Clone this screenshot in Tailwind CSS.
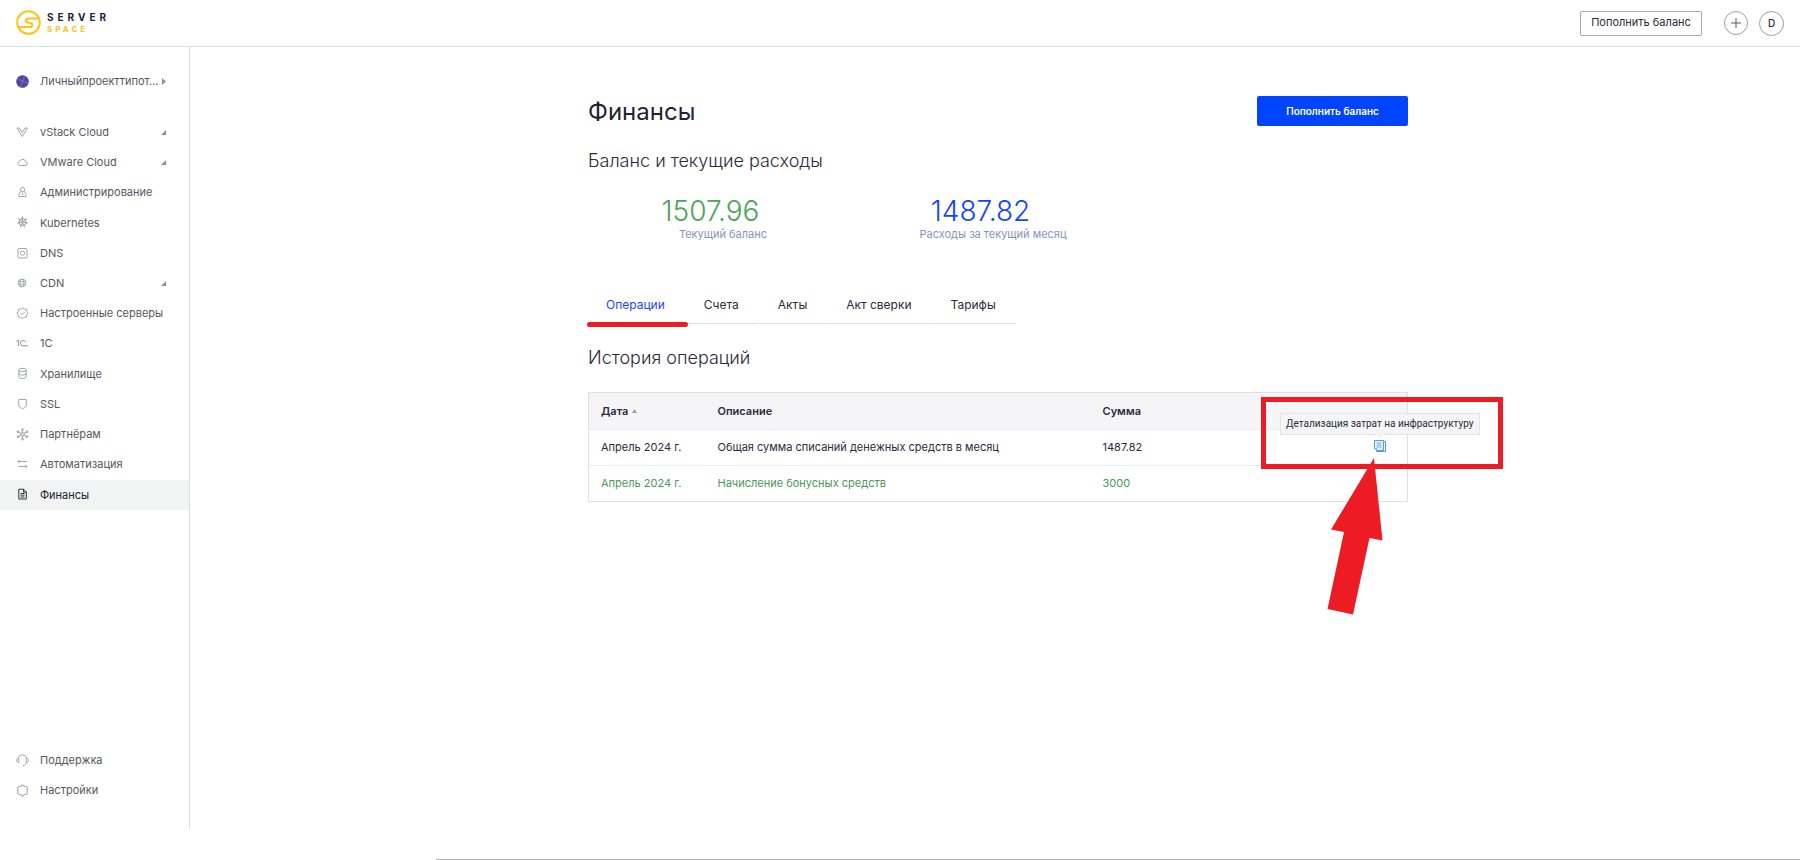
<!DOCTYPE html>
<html lang="ru">
<head>
<meta charset="utf-8">
<meta name="viewport" content="width=device-width, initial-scale=1">
<title>Serverspace — Финансы</title>
<script src="https://cdn.jsdelivr.net/npm/@tailwindcss/browser@4"></script>
</head>
<body class="flex min-h-screen flex-col bg-white font-['Inter',sans-serif] text-[11px] text-[#2b2b3c]">

<header class="flex h-[47px] shrink-0 items-center justify-between border-b border-[#dcdddd] px-4">
  <a href="#" class="flex items-center gap-[5px]" aria-label="Serverspace">
    <svg class="size-[26px]" viewBox="0 0 26 26" fill="none" stroke="#fcc419" stroke-width="2" stroke-linecap="round">
      <circle cx="12.500" cy="12.500" r="11.300"/>
      <path d="M22.500 8.500H12a2.200 2.200 0 0 0-2.300 2.100c0 1.100.9 1.600 2.200 1.900l2.300.5c1.300.3 2.100.9 2.100 2 0 1.200-.9 2-2.200 2H2.800" stroke-width="2.200"/>
    </svg>
    <span class="flex flex-col gap-[3px] pb-px font-bold">
      <span class="text-[10px] leading-[10px] tracking-[4px] text-[#23263b]">SERVER</span>
      <span class="text-[8px] leading-[8px] tracking-[3px] text-[#fcc419]">SPACE</span>
    </span>
  </a>
  <div class="flex items-center">
    <button class="mr-[22px] h-[25px] w-[122px] rounded-[2px] border border-[#a5a7ab] pb-px text-[#2b2b3c]">Пополнить баланс</button>
    <button class="mr-[11px] flex size-6 items-center justify-center rounded-full border border-[#9c9ea2]" aria-label="Создать">
      <svg class="size-[10px]" viewBox="0 0 10 10" stroke="#55585f" fill="none"><path d="M5 0v10M0 5h10"/></svg>
    </button>
    <button class="size-[25px] rounded-full border border-[#9c9ea2] text-[10px] font-medium">D</button>
  </div>
</header>

<div class="flex flex-1">
  <aside class="mb-[31px] flex w-[190px] shrink-0 flex-col border-r border-[#dcdddd] pt-[19px] pb-6 text-[#555960]">
    <a href="#" class="flex h-[30px] items-center pl-4">
      <svg class="mr-[11px] size-[13px]" viewBox="0 0 13 13"><circle cx="6.500" cy="6.500" r="6.300" fill="#4f46a3"/><path d="M6.500 6.500 1 3.500M6.500 6.500 9 1M6.500 6.500 12 8M6.500 6.500 4 12" stroke="#8a84c9" stroke-width=".7"/></svg>
      <span class="w-[122px]">Личныйпроекттипот...</span>
      <svg class="h-[7px] w-1" viewBox="0 0 4 7"><path d="M0 0l4 3.500L0 7z" fill="#8d9095"/></svg>
    </a>

    <nav class="mt-[21px] grid h-[393px] auto-rows-fr">
      <a href="#" class="flex items-center pr-[23px] pl-4">
        <svg class="mr-[11px] size-[13px]" viewBox="0 0 13 13" fill="none" stroke="#a2a5a9"><path d="M1 2h2.500l2.700 4.500L9 2h2.500L6.200 10.500z"/></svg>
        <span class="flex-1">vStack Cloud</span>
        <svg class="size-[5px]" viewBox="0 0 5 5"><path d="M5 0v5H0z" fill="#8d9095"/></svg>
      </a>
      <a href="#" class="flex items-center pr-[23px] pl-4">
        <svg class="mr-[11px] size-[13px]" viewBox="0 0 13 13" fill="none" stroke="#a2a5a9"><path d="M3.500 9.500h5.800a1.900 1.900 0 0 0 .2-3.800 2.900 2.900 0 0 0-5.600-.5A2.200 2.200 0 0 0 3.500 9.500z"/></svg>
        <span class="flex-1">VMware Cloud</span>
        <svg class="size-[5px]" viewBox="0 0 5 5"><path d="M5 0v5H0z" fill="#8d9095"/></svg>
      </a>
      <a href="#" class="flex items-center pl-4">
        <svg class="mr-[11px] size-[13px]" viewBox="0 0 13 13" fill="none" stroke="#a2a5a9"><circle cx="6.500" cy="3.500" r="2.200"/><path d="M5 5.500C3.500 6.200 3 8 2.800 10.500h7.400C10 8 9.500 6.200 8 5.500M6.500 6.500v2.500"/></svg>
        <span>Администрирование</span>
      </a>
      <a href="#" class="flex items-center pl-4">
        <svg class="mr-[11px] size-[13px]" viewBox="0 0 13 13" fill="none" stroke="#909398" stroke-width=".9"><circle cx="6.500" cy="6" r="3.600"/><circle cx="6.500" cy="6" r="1"/><path d="M6.500.5V5M6.500 7l2.300 4.300M6.500 7l-2.300 4.300M7.500 6.200l4.300 1M5.500 6.200l-4.300 1M7.300 5.300l3.500-2.800M5.700 5.300 2.200 2.500"/></svg>
        <span>Kubernetes</span>
      </a>
      <a href="#" class="flex items-center pl-4">
        <svg class="mr-[11px] size-[13px]" viewBox="0 0 13 13" fill="none" stroke="#a2a5a9"><rect x="2" y="1.500" width="9" height="9.500" rx="1"/><circle cx="6.500" cy="6.200" r="2.100"/></svg>
        <span>DNS</span>
      </a>
      <a href="#" class="flex items-center pr-[23px] pl-4">
        <svg class="mr-[11px] size-[13px]" viewBox="0 0 13 13" fill="none" stroke="#a2a5a9" stroke-width=".9"><circle cx="6" cy="6" r="4"/><ellipse cx="6" cy="6" rx="1.900" ry="4"/><path d="M2.300 4.700h7.400M2.300 7.300h7.400"/></svg>
        <span class="flex-1">CDN</span>
        <svg class="size-[5px]" viewBox="0 0 5 5"><path d="M5 0v5H0z" fill="#8d9095"/></svg>
      </a>
      <a href="#" class="flex items-center pl-4">
        <svg class="mr-[11px] size-[13px]" viewBox="0 0 13 13" fill="none" stroke="#a2a5a9"><path d="M6.500.8 8.300 2.100l2.500.2v2.300L12 6.200l-1.200 1.600v2.300l-2.500.2-1.800 1.300-1.800-1.300-2.500-.2V7.800L1 6.200l1.200-1.600V2.300l2.500-.2z"/><path d="m4.500 6.200 1.500 1.500L8.700 5"/></svg>
        <span>Настроенные серверы</span>
      </a>
      <a href="#" class="flex items-center pl-4">
        <svg class="mr-[11px] size-[13px]" viewBox="0 0 13 13" fill="none" stroke="#8d9095"><path d="M.5 4.300 2.300 3.200V9M9.700 5.200a2.700 2.700 0 1 0-2.600 3.600h4.900"/></svg>
        <span>1C</span>
      </a>
      <a href="#" class="flex items-center pl-4">
        <svg class="mr-[11px] size-[13px]" viewBox="0 0 13 13" fill="none" stroke="#a2a5a9"><ellipse cx="6.500" cy="3" rx="3.700" ry="1.700"/><path d="M2.800 3v6.800c0 .9 1.700 1.700 3.700 1.700s3.700-.8 3.700-1.700V3M2.800 6.400c0 .9 1.700 1.700 3.700 1.700s3.700-.8 3.700-1.700"/></svg>
        <span>Хранилище</span>
      </a>
      <a href="#" class="flex items-center pl-4">
        <svg class="mr-[11px] size-[13px]" viewBox="0 0 13 13" fill="none" stroke="#a2a5a9"><path d="M3 1.500h7l.3.500v5.200c0 1.600-1.800 2.600-3.800 3.600-2-1-3.800-2-3.800-3.600V2z"/></svg>
        <span>SSL</span>
      </a>
      <a href="#" class="flex items-center pl-4">
        <svg class="mr-[11px] size-[13px]" viewBox="0 0 13 13" fill="none" stroke="#909398" stroke-width=".9"><circle cx="6.500" cy="6.200" r="1.600"/><circle cx="6.500" cy="1.500" r=".9"/><circle cx="2" cy="3.700" r=".9"/><circle cx="11" cy="3.700" r=".9"/><circle cx="2" cy="8.700" r=".9"/><circle cx="11" cy="8.700" r=".9"/><circle cx="6.500" cy="11.200" r=".9"/><path d="M6.500 2.400v2.200M6.500 7.800v2.500M2.800 4.200l2.300 1.200M10.200 4.200 7.900 5.400M2.800 8.200l2.300-1.200M10.200 8.200 7.900 7"/></svg>
        <span>Партнёрам</span>
      </a>
      <a href="#" class="flex items-center pl-4">
        <svg class="mr-[11px] size-[13px]" viewBox="0 0 13 13" fill="none" stroke="#a2a5a9"><path d="M11 3.500H2M3.800 1.700 2 3.500l1.800 1.800M2.500 8.500H11M9.200 6.700 11 8.500l-1.800 1.800"/></svg>
        <span>Автоматизация</span>
      </a>
      <a href="#" class="flex items-center bg-[#f2f4f4] pl-4 text-[#1f2130]" aria-current="page">
        <svg class="mr-[11px] size-[13px]" viewBox="0 0 13 13" fill="none" stroke="#33353f"><path d="M2.800 1.200h4.900L10.300 4v7H2.800z"/><path d="M7.500 1.200V4.200h2.800M4.500 5.500h4M4.500 7.200h4M4.500 9h4"/></svg>
        <span>Финансы</span>
      </a>
    </nav>

    <nav class="mt-auto flex flex-col">
      <a href="#" class="flex h-[30px] items-center pl-4">
        <svg class="mr-[11px] size-[13px]" viewBox="0 0 13 13" fill="none" stroke="#a2a5a9"><path d="M2.300 4.200a4.300 4.300 0 0 1 8.400 0M2.800 4.300v4.300C1.300 8.600.6 7.700.6 6.400s.7-2.100 2.200-2.100zM10.200 4.300v4.300c1.500 0 2.200-.9 2.200-2.200s-.7-2.100-2.200-2.100zM10.200 8.600c0 1.700-1.200 2.800-3.200 3.200"/></svg>
        <span>Поддержка</span>
      </a>
      <a href="#" class="flex h-[30px] items-center pl-4">
        <svg class="mr-[11px] size-[13px]" viewBox="0 0 13 13" fill="none" stroke="#999ca1"><path d="M5.500 1.200h2l.6 1.400 1.500-.2 1.900 1.300-.6 1.300.6 1.500-.6 1.500.6 1.300-1.900 1.300-1.500-.2-.6 1.400h-2l-.6-1.400-1.500.2-1.900-1.300.6-1.300-.6-1.500.6-1.500-.6-1.300 1.900-1.300 1.500.2z" stroke-linejoin="round"/></svg>
        <span>Настройки</span>
      </a>
    </nav>
  </aside>

  <main class="flex flex-1 flex-col pl-[6px]">
    <div class="mx-auto w-full max-w-[820px] pt-[49px]">
      <div class="flex items-start justify-between">
        <h1 class="pt-px text-[24px] leading-[30px] text-[#1f2233]">Финансы</h1>
        <button class="h-[30px] w-[151px] rounded-[2px] bg-[#0044ff] text-[10px] font-semibold text-white">Пополнить баланс</button>
      </div>

      <h2 class="mt-[22px] text-[18px] leading-6 font-light">Баланс и текущие расходы</h2>
      <div class="mt-[22px] flex text-center">
        <div class="w-[270px]">
          <p class="pr-[25px] text-[28px] leading-8 font-light text-[#4ea35a]">1507.96</p>
          <p class="leading-[14px] text-[#8296bd]">Текущий баланс</p>
        </div>
        <div class="w-[270px]">
          <p class="pr-[25px] text-[28px] leading-8 font-light text-[#0f45ff]">1487.82</p>
          <p class="leading-[14px] text-[#8296bd]">Расходы за текущий месяц</p>
        </div>
      </div>

      <div class="mt-[45px] flex gap-px text-[12px]" role="tablist">
        <div class="relative flex">
          <button role="tab" aria-selected="true" class="h-[38px] border-b border-[#dfe1e3] pr-5 pl-[18px] text-[#1f45ff]">Операции</button>
          <span class="absolute -right-[3px] -bottom-[3px] -left-px h-[5px] rounded-full bg-[#ed1c24]"></span>
        </div>
        <button role="tab" class="h-[38px] border-b border-[#dfe1e3] pr-5 pl-[18px]">Счета</button>
        <button role="tab" class="h-[38px] border-b border-[#dfe1e3] pr-5 pl-[18px]">Акты</button>
        <button role="tab" class="h-[38px] border-b border-[#dfe1e3] pr-5 pl-[18px]">Акт сверки</button>
        <button role="tab" class="h-[38px] border-b border-[#dfe1e3] pr-5 pl-[18px]">Тарифы</button>
      </div>

      <h2 class="mt-[22px] text-[18px] leading-6 font-light">История операций</h2>
      <table class="mt-[22px] w-full table-fixed border-collapse border border-[#dfe0e3] text-left">
        <thead>
          <tr class="h-[37px] border-b border-[#e6ecf5] bg-[#f5f5f8]">
            <th class="w-[117px] pl-3 font-semibold">
              <span class="flex items-center gap-1">Дата
                <svg class="h-1 w-[5px]" viewBox="0 0 5 4"><path d="M2.500 0 5 4H0z" fill="#9a9da3"/></svg>
              </span>
            </th>
            <th class="w-[385px] pl-3 font-semibold">Описание</th>
            <th class="pl-3 font-semibold">Сумма</th>
            <th class="w-[51px]"></th>
          </tr>
        </thead>
        <tbody>
          <tr class="h-9 border-b border-[#e6eef6]">
            <td class="pl-3">Апрель 2024 г.</td>
            <td class="pl-3">Общая сумма списаний денежных средств в месяц</td>
            <td class="pl-3">1487.82</td>
            <td class="pr-1 pb-1">
              <div class="relative mx-auto size-3">
                <button class="block size-3" aria-describedby="details-tip" aria-label="Детализация">
                  <svg class="size-3" viewBox="0 0 12 12" fill="#eaf4fc" stroke="#4d9edb"><path d="M2.500 10.500v1h9V1.500h-2"/><path d="M.5.500h9v10h-7l-2-2z"/><path d="M2.500 3h5M2.500 5h5M2.500 7h5M.5 8.500h2v2" stroke-width=".8"/></svg>
                </button>
                <!-- highlight frame around the tooltip -->
                <div class="absolute -top-[43px] -left-[113px] h-[72px] w-[242px] border-[5px] border-[#ed1c24]"></div>
                <div id="details-tip" role="tooltip" class="absolute bottom-[17px] left-1/2 flex h-[22px] w-[200px] -translate-x-1/2 items-center justify-center border border-[#e3e4e8] bg-[#f5f5f8] font-['Roboto',sans-serif] text-[10px] whitespace-nowrap">
                  Детализация затрат на инфраструктуру
                  <svg class="absolute top-5 left-1/2 h-[5px] w-2 -translate-x-1/2" viewBox="0 0 8 5"><path d="M0 0h8L4 4.500z" fill="#f5f5f8"/></svg>
                </div>
                <!-- pointer arrow -->
                <svg class="absolute top-[18px] -left-[47px] h-[157px] w-[56px] max-w-none" viewBox="0 0 56 157"><path d="M47 0l8.500 82.500-13-2.500L26 156.500.5 151 17 74 4 71.500z" fill="#ed1c24"/></svg>
              </div>
            </td>
          </tr>
          <tr class="h-9 text-[#489857]">
            <td class="pl-3">Апрель 2024 г.</td>
            <td class="pl-3">Начисление бонусных средств</td>
            <td class="pl-3">3000</td>
            <td></td>
          </tr>
        </tbody>
      </table>
    </div>
    <div class="mt-auto ml-60 h-px bg-[#a9acb0]"></div>
  </main>
</div>
</body>
</html>
